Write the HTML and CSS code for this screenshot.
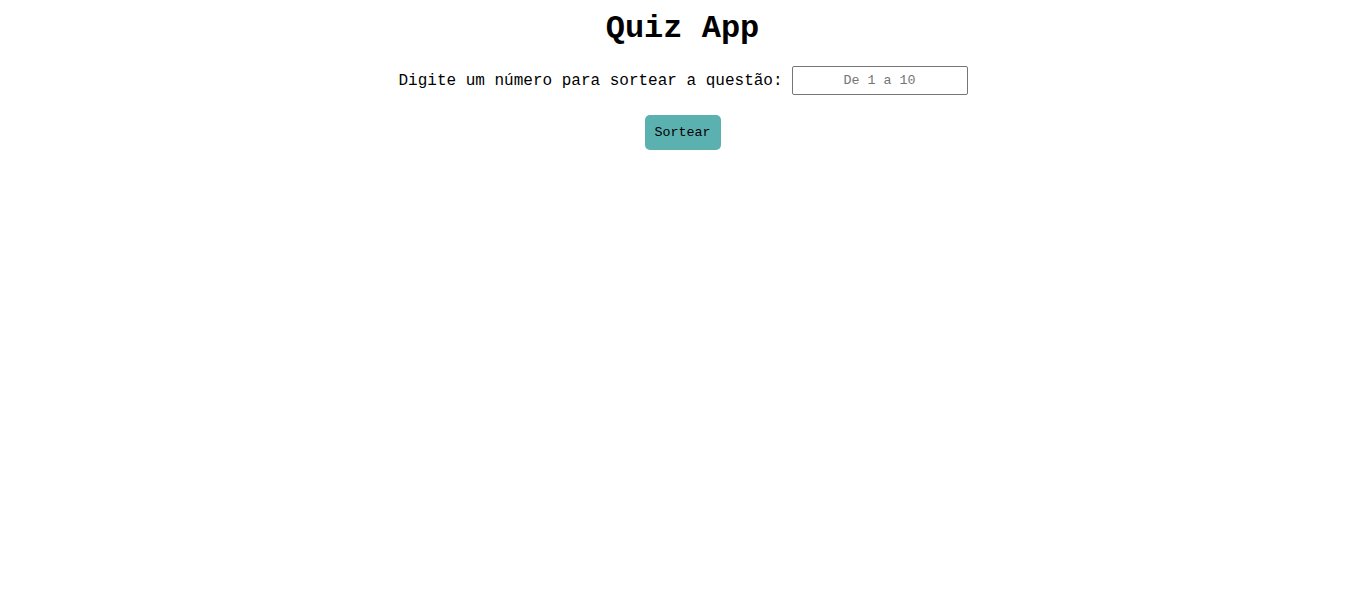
FILE: index.html
```html
<!DOCTYPE html>
<html lang="pt-BR">
<head>
<meta charset="utf-8">
<title>Quiz App</title>
<link rel="stylesheet" href="styles.css">
</head>
<body>
<main class="app">
  <h1 class="title">Quiz App</h1>
  <div class="row">
    <label class="label" for="num">Digite um número para sortear a questão:</label>
    <input class="input" id="num" type="text" placeholder="De 1 a 10">
  </div>
  <button class="btn" type="button">Sortear</button>
</main>
</body>
</html>
```

FILE: styles.css
```css
body {
  margin: 8px;
  font-family: "Liberation Mono", "Courier New", monospace;
  background: #fff;
  color: #000;
}
.app {
  display: flex;
  flex-direction: column;
  align-items: center;
}
.title {
  margin: 3px 0 19px;
  font-size: 32px;
  font-weight: bold;
  line-height: 36px;
}
.row {
  display: flex;
  align-items: center;
  gap: 9px;
  margin-bottom: 20px;
  padding-left: 1px;
}
.label {
  font-size: 16px;
}
.input {
  box-sizing: border-box;
  width: 176px;
  height: 29px;
  padding: 0 6px;
  border: 1px solid #767676;
  border-radius: 2px;
  font-family: "Liberation Mono", "Courier New", monospace;
  font-size: 13.33px;
  text-align: center;
}
.input::placeholder {
  color: #757575;
}
.btn {
  padding: 10px;
  border: none;
  border-radius: 5px;
  background: #5bb1b0;
  color: #000;
  font-family: "Liberation Mono", "Courier New", monospace;
  font-size: 13.33px;
  line-height: 15px;
  cursor: pointer;
}
```
